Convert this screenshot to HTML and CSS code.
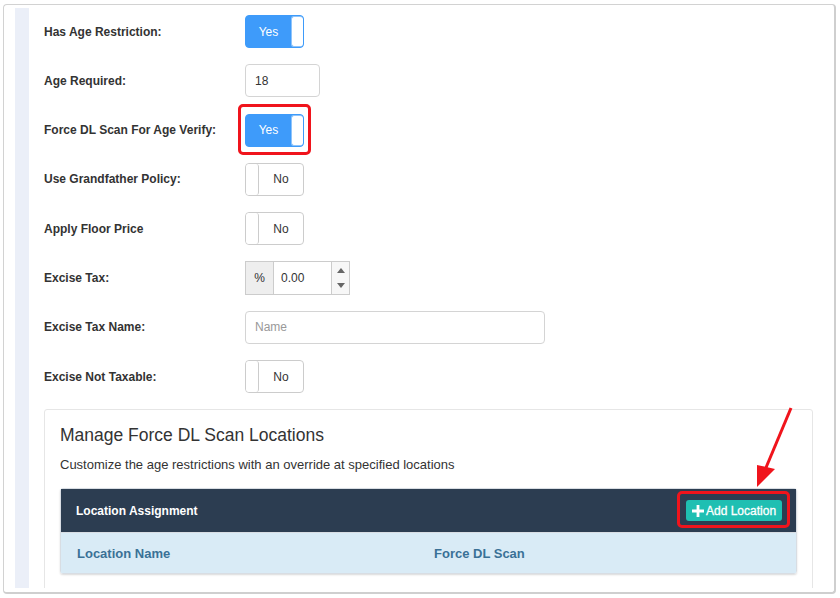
FILE: index.html
```html
<!DOCTYPE html>
<html lang="en">
  <head>
    <meta charset="UTF-8" />
    <title>Age Restriction Settings</title>
    <link rel="stylesheet" href="styles.css">
  </head>
  <body>
    <div class="frame">
      <div class="sheet">
        <div class="content">
          <!-- Campos del formulario -->
          <div class="row">
            <label class="label">Has Age Restriction:</label>
            <div class="toggle on"><span class="toggle-text">Yes</span><span class="knob"></span></div>
          </div>
          <div class="row">
            <label class="label">Age Required:</label>
            <input class="input input-age" type="text" value="18" />
          </div>
          <div class="row">
            <label class="label">Force DL Scan For Age Verify:</label>
            <div class="highlight">
              <div class="toggle on"><span class="toggle-text">Yes</span><span class="knob"></span></div>
            </div>
          </div>
          <div class="row">
            <label class="label">Use Grandfather Policy:</label>
            <div class="toggle"><span class="knob"></span><span class="toggle-text">No</span></div>
          </div>
          <div class="row">
            <label class="label">Apply Floor Price</label>
            <div class="toggle"><span class="knob"></span><span class="toggle-text">No</span></div>
          </div>
          <div class="row">
            <label class="label">Excise Tax:</label>
            <div class="input-group">
              <span class="addon">%</span>
              <span class="number">0.00</span>
              <span class="spinner">
                <svg width="8" height="5" viewBox="0 0 8 5"><path d="M0 5 L4 0 L8 5 Z" fill="#666"/></svg>
                <svg width="8" height="5" viewBox="0 0 8 5"><path d="M0 0 L8 0 L4 5 Z" fill="#666"/></svg>
              </span>
            </div>
          </div>
          <div class="row">
            <label class="label">Excise Tax Name:</label>
            <input class="input input-name" type="text" placeholder="Name" />
          </div>
          <div class="row">
            <label class="label">Excise Not Taxable:</label>
            <div class="toggle"><span class="knob"></span><span class="toggle-text">No</span></div>
          </div>

          <!-- Ubicaciones -->
          <div class="card">
            <h3 class="card-title">Manage Force DL Scan Locations</h3>
            <p class="card-text">Customize the age restrictions with an override at specified locations</p>
            <div class="panel">
              <div class="panel-heading">
                <span class="panel-title">Location Assignment</span>
                <div class="highlight highlight-btn">
                  <button class="btn-add">
                    <svg width="12" height="12" viewBox="0 0 12 12"><path d="M6 0 V12 M0 6 H12" stroke="#fff" stroke-width="2.8"/></svg>
                    Add Location
                  </button>
                </div>
              </div>
              <div class="table-head">
                <span class="col col-name">Location Name</span>
                <span class="col">Force DL Scan</span>
              </div>
            </div>
          </div>
        </div>
      </div>
      <svg class="arrow" width="50" height="90" viewBox="0 0 50 90">
        <path d="M43 7 L17 69" stroke="#f0141c" stroke-width="3" fill="none"/>
        <path d="M9 86 L9 64 L27 68 Z" fill="#f0141c"/>
      </svg>
    </div>
  </body>
</html>
```

FILE: styles.css
```css
body {
  margin: 0;
  background: #fff;
  font-family: "Liberation Sans", Arial, sans-serif;
  color: #333;
}

.frame {
  position: relative;
  margin: 4px 0 0 3px;
  width: 819px;
  height: 584px;
  border: 1px solid #d2d2d2;
  border-right: 2px solid #cfcfcf;
  border-bottom: 2px solid #cfcfcf;
  border-radius: 4px;
  padding: 3px 0 0 11px;
  box-sizing: content-box;
  overflow: hidden;
}

.sheet {
  height: 580px;
  border-left: 14px solid #ebeff8;
  overflow: hidden;
}

.content {
  padding: 7px 0 0 15px;
  width: 769px;
}

/* Filas del formulario */
.row {
  display: flex;
  align-items: center;
  height: 33px;
  margin-bottom: 16.3px;
}

.label {
  width: 201px;
  font-size: 12px;
  font-weight: bold;
  color: #333;
}

.toggle {
  display: flex;
  width: 57px;
  height: 31px;
  border: 1px solid #ccc;
  border-radius: 4px;
  background: #fff;
  overflow: hidden;
}

.toggle.on {
  background: #3e9bfa;
  border-color: #3e9bfa;
}

.toggle-text {
  flex: 1;
  display: flex;
  align-items: center;
  justify-content: center;
  font-size: 12px;
  color: #333;
}

.toggle.on .toggle-text {
  color: #fff;
}

.knob {
  width: 12px;
  background: #fff;
  border-right: 1px solid #ccc;
  border-radius: 3px;
}

.toggle.on .knob {
  border: 1px solid #8fc4fb;
  border-right: none;
  width: 11px;
}

.highlight {
  position: relative;
}

.highlight::after {
  content: "";
  position: absolute;
  left: -7px;
  right: -7px;
  top: -10px;
  bottom: -8px;
  border: 3px solid #f0141c;
  border-radius: 5px;
}

.input {
  height: 33px;
  box-sizing: border-box;
  border: 1px solid #d4d4d4;
  border-radius: 4px;
  padding: 0 9px;
  font-family: inherit;
  font-size: 12px;
  color: #333;
}

.input::placeholder {
  color: #999;
}

.input-age {
  width: 75px;
}

.input-name {
  width: 300px;
}

.input-group {
  display: flex;
  height: 34px;
  border: 1px solid #ccc;
  box-sizing: border-box;
  width: 105px;
}

.addon {
  width: 27px;
  background: #eee;
  border-right: 1px solid #ccc;
  display: flex;
  align-items: center;
  justify-content: center;
  font-size: 12px;
}

.number {
  flex: 1;
  display: flex;
  align-items: center;
  padding-left: 7px;
  font-size: 12px;
}

.spinner {
  width: 17px;
  border-left: 1px solid #ccc;
  background: #f7f7f7;
  display: flex;
  flex-direction: column;
  justify-content: space-between;
  align-items: center;
  padding: 6px 0;
}

/* Tarjeta de ubicaciones */
.card {
  margin-top: 0;
  width: 737px;
  height: 200px;
  border: 1px solid #e6e6e6;
  border-radius: 3px;
  padding: 0 15px;
}

.card-title {
  margin: 15px 0 0;
  font-size: 17.5px;
  font-weight: normal;
  color: #333;
  line-height: 20px;
}

.card-text {
  margin: 10px 0 0;
  font-size: 13px;
  line-height: 20px;
}

.panel {
  margin-top: 13px;
  border: 1px solid #d8dde3;
  border-radius: 3px;
  box-shadow: 0 1px 2px rgba(0, 0, 0, 0.15);
}

.panel-heading {
  height: 43px;
  background: #2c3d51;
  display: flex;
  align-items: center;
  justify-content: space-between;
  padding: 0 14px 0 15px;
  border-bottom: 1px solid #d8dde3;
}

.panel-title {
  color: #fff;
  font-size: 12px;
  font-weight: bold;
}

.highlight-btn::after {
  left: -9px;
  right: -8px;
  top: -9px;
  bottom: -7px;
}

.btn-add {
  display: flex;
  align-items: center;
  gap: 2px;
  width: 96px;
  height: 21px;
  padding: 0 0 0 6px;
  border: none;
  border-radius: 3px;
  background: #1fbfb2;
  color: #fff;
  font-family: inherit;
  font-size: 12px;
  -webkit-text-stroke: 0.3px #fff;
}

.table-head {
  height: 40px;
  background: #d9ebf6;
  display: flex;
  align-items: center;
  padding-left: 16px;
}

.col {
  font-size: 13px;
  font-weight: bold;
  color: #3a7196;
}

.col-name {
  width: 357px;
}

.arrow {
  position: absolute;
  left: 744px;
  top: 396px;
}
```
